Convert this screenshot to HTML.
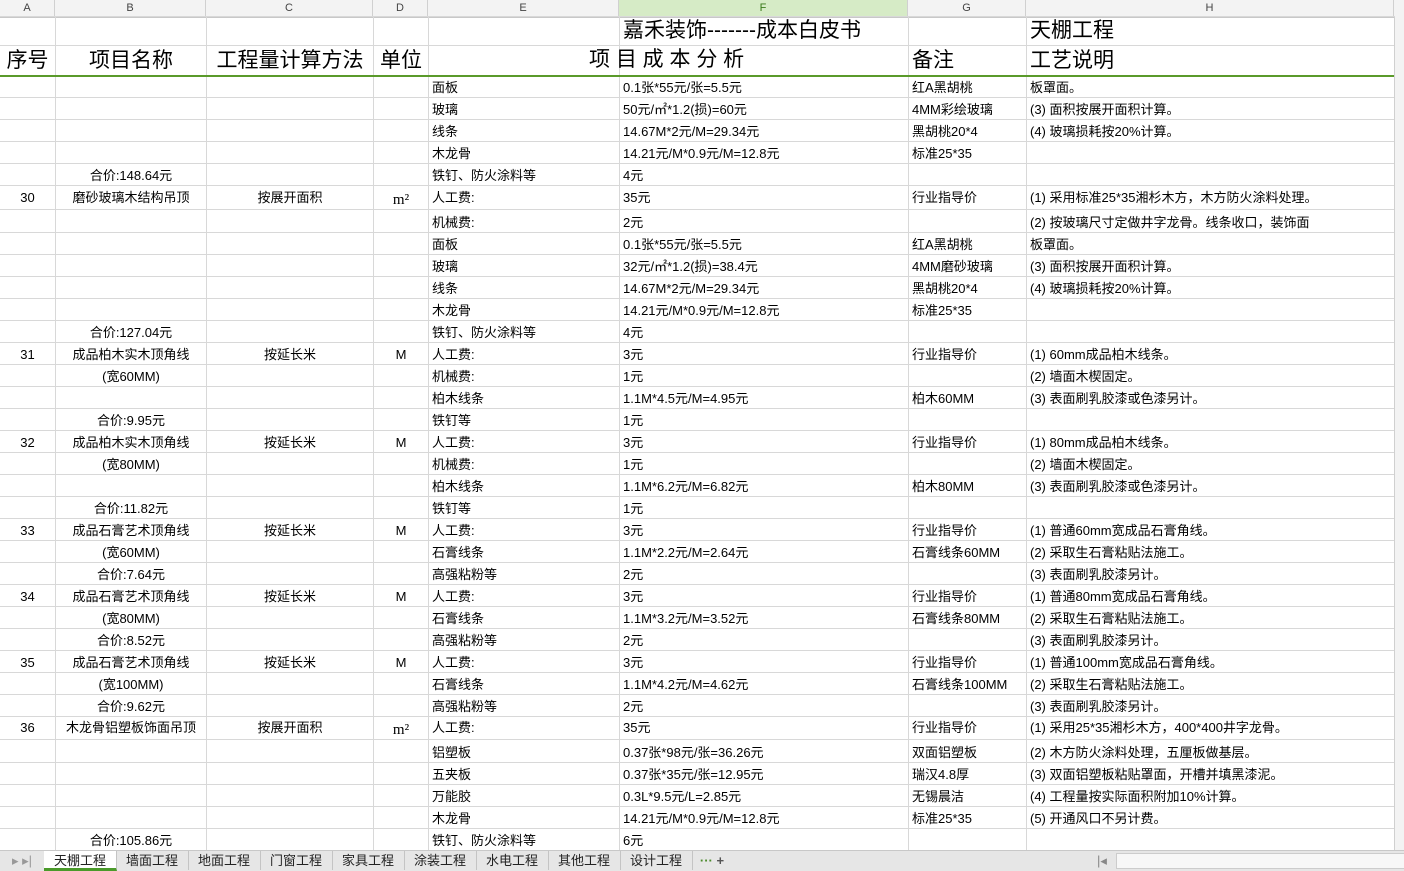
<!DOCTYPE html><html><head><meta charset="utf-8"><style>
body{margin:0;width:1404px;height:870px;overflow:hidden;background:#fff;font-family:"Liberation Sans","Noto Sans CJK SC",sans-serif;color:#000;position:relative}
.hdr{position:absolute;top:0;left:0;width:1404px;height:17px;background:#f3f3f3;border-bottom:1px solid #c8c8c8;font-size:11px;color:#444}
.hdr div{position:absolute;top:0;height:17px;line-height:17px;text-align:center;border-right:1px solid #d0d0d0;box-sizing:border-box}
table{position:absolute;top:16px;left:-1px;border-collapse:collapse;table-layout:fixed;font-size:13px}
td{border:1px solid #d8d8d8;padding:0 3px;white-space:nowrap;overflow:visible;vertical-align:bottom;line-height:18px}
td.c{text-align:center}
tr.big td{font-size:21px;line-height:28px}
.tabs{position:absolute;top:850px;left:0;width:1404px;height:20px;background:#e6e6e6;border-top:1px solid #c8c8c8;font-size:13px}
.tabs span{position:absolute;top:0;height:19px;line-height:19px;text-align:center;border-right:1px solid #c4c4c4;color:#222}
</style></head><body>
<div class="hdr">
<div style="left:0;width:55px">A</div><div style="left:55px;width:151px">B</div><div style="left:206px;width:167px">C</div><div style="left:373px;width:55px">D</div><div style="left:428px;width:191px">E</div><div style="left:619px;width:289px;background:#d6ebc6;color:#3a7a1a">F</div><div style="left:908px;width:118px">G</div><div style="left:1026px;width:368px">H</div>
</div>
<table>
<colgroup><col style="width:56px"><col style="width:151px"><col style="width:167px"><col style="width:55px"><col style="width:191px"><col style="width:289px"><col style="width:118px"><col style="width:368px"></colgroup>
<tr class="big" style="height:29px"><td></td><td></td><td></td><td></td><td></td><td>嘉禾装饰-------成本白皮书</td><td></td><td>天棚工程</td></tr>
<tr class="big" style="height:30px;border-bottom:2px solid #5a9a2a"><td class="c">序号</td><td class="c">项目名称</td><td class="c">工程量计算方法</td><td class="c">单位</td><td style="text-align:right;overflow:visible;position:relative"><span style="position:absolute;left:160px;bottom:1px">项 目 成 本 分 析</span></td><td></td><td>备注</td><td>工艺说明</td></tr>
<tr style="height:22px"><td></td><td></td><td></td><td></td><td>面板</td><td>0.1张*55元/张=5.5元</td><td>红A黑胡桃</td><td>板罩面。</td></tr>
<tr style="height:22px"><td></td><td></td><td></td><td></td><td>玻璃</td><td>50元/㎡*1.2(损)=60元</td><td>4MM彩绘玻璃</td><td>(3) 面积按展开面积计算。</td></tr>
<tr style="height:22px"><td></td><td></td><td></td><td></td><td>线条</td><td>14.67M*2元/M=29.34元</td><td>黑胡桃20*4</td><td>(4) 玻璃损耗按20%计算。</td></tr>
<tr style="height:22px"><td></td><td></td><td></td><td></td><td>木龙骨</td><td>14.21元/M*0.9元/M=12.8元</td><td>标准25*35</td><td></td></tr>
<tr style="height:22px"><td></td><td class="c">合价:148.64元</td><td></td><td></td><td>铁钉、防火涂料等</td><td>4元</td><td></td><td></td></tr>
<tr style="height:24px"><td class="c" style="vertical-align:middle">30</td><td class="c" style="vertical-align:middle">磨砂玻璃木结构吊顶</td><td class="c" style="vertical-align:middle">按展开面积</td><td class="c" style="font-family:'Liberation Serif',serif;font-size:15px">m²</td><td style="vertical-align:middle">人工费:</td><td style="vertical-align:middle">35元</td><td style="vertical-align:middle">行业指导价</td><td style="vertical-align:middle">(1) 采用标准25*35湘杉木方，木方防火涂料处理。</td></tr>
<tr style="height:23px"><td></td><td></td><td></td><td></td><td>机械费:</td><td>2元</td><td></td><td>(2) 按玻璃尺寸定做井字龙骨。线条收口，装饰面</td></tr>
<tr style="height:22px"><td></td><td></td><td></td><td></td><td>面板</td><td>0.1张*55元/张=5.5元</td><td>红A黑胡桃</td><td>板罩面。</td></tr>
<tr style="height:22px"><td></td><td></td><td></td><td></td><td>玻璃</td><td>32元/㎡*1.2(损)=38.4元</td><td>4MM磨砂玻璃</td><td>(3) 面积按展开面积计算。</td></tr>
<tr style="height:22px"><td></td><td></td><td></td><td></td><td>线条</td><td>14.67M*2元/M=29.34元</td><td>黑胡桃20*4</td><td>(4) 玻璃损耗按20%计算。</td></tr>
<tr style="height:22px"><td></td><td></td><td></td><td></td><td>木龙骨</td><td>14.21元/M*0.9元/M=12.8元</td><td>标准25*35</td><td></td></tr>
<tr style="height:22px"><td></td><td class="c">合价:127.04元</td><td></td><td></td><td>铁钉、防火涂料等</td><td>4元</td><td></td><td></td></tr>
<tr style="height:22px"><td class="c">31</td><td class="c">成品柏木实木顶角线</td><td class="c">按延长米</td><td class="c">M</td><td>人工费:</td><td>3元</td><td>行业指导价</td><td>(1) 60mm成品柏木线条。</td></tr>
<tr style="height:22px"><td></td><td class="c">(宽60MM)</td><td></td><td></td><td>机械费:</td><td>1元</td><td></td><td>(2) 墙面木楔固定。</td></tr>
<tr style="height:22px"><td></td><td></td><td></td><td></td><td>柏木线条</td><td>1.1M*4.5元/M=4.95元</td><td>柏木60MM</td><td>(3) 表面刷乳胶漆或色漆另计。</td></tr>
<tr style="height:22px"><td></td><td class="c">合价:9.95元</td><td></td><td></td><td>铁钉等</td><td>1元</td><td></td><td></td></tr>
<tr style="height:22px"><td class="c">32</td><td class="c">成品柏木实木顶角线</td><td class="c">按延长米</td><td class="c">M</td><td>人工费:</td><td>3元</td><td>行业指导价</td><td>(1) 80mm成品柏木线条。</td></tr>
<tr style="height:22px"><td></td><td class="c">(宽80MM)</td><td></td><td></td><td>机械费:</td><td>1元</td><td></td><td>(2) 墙面木楔固定。</td></tr>
<tr style="height:22px"><td></td><td></td><td></td><td></td><td>柏木线条</td><td>1.1M*6.2元/M=6.82元</td><td>柏木80MM</td><td>(3) 表面刷乳胶漆或色漆另计。</td></tr>
<tr style="height:22px"><td></td><td class="c">合价:11.82元</td><td></td><td></td><td>铁钉等</td><td>1元</td><td></td><td></td></tr>
<tr style="height:22px"><td class="c">33</td><td class="c">成品石膏艺术顶角线</td><td class="c">按延长米</td><td class="c">M</td><td>人工费:</td><td>3元</td><td>行业指导价</td><td>(1) 普通60mm宽成品石膏角线。</td></tr>
<tr style="height:22px"><td></td><td class="c">(宽60MM)</td><td></td><td></td><td>石膏线条</td><td>1.1M*2.2元/M=2.64元</td><td>石膏线条60MM</td><td>(2) 采取生石膏粘贴法施工。</td></tr>
<tr style="height:22px"><td></td><td class="c">合价:7.64元</td><td></td><td></td><td>高强粘粉等</td><td>2元</td><td></td><td>(3) 表面刷乳胶漆另计。</td></tr>
<tr style="height:22px"><td class="c">34</td><td class="c">成品石膏艺术顶角线</td><td class="c">按延长米</td><td class="c">M</td><td>人工费:</td><td>3元</td><td>行业指导价</td><td>(1) 普通80mm宽成品石膏角线。</td></tr>
<tr style="height:22px"><td></td><td class="c">(宽80MM)</td><td></td><td></td><td>石膏线条</td><td>1.1M*3.2元/M=3.52元</td><td>石膏线条80MM</td><td>(2) 采取生石膏粘贴法施工。</td></tr>
<tr style="height:22px"><td></td><td class="c">合价:8.52元</td><td></td><td></td><td>高强粘粉等</td><td>2元</td><td></td><td>(3) 表面刷乳胶漆另计。</td></tr>
<tr style="height:22px"><td class="c">35</td><td class="c">成品石膏艺术顶角线</td><td class="c">按延长米</td><td class="c">M</td><td>人工费:</td><td>3元</td><td>行业指导价</td><td>(1) 普通100mm宽成品石膏角线。</td></tr>
<tr style="height:22px"><td></td><td class="c">(宽100MM)</td><td></td><td></td><td>石膏线条</td><td>1.1M*4.2元/M=4.62元</td><td>石膏线条100MM</td><td>(2) 采取生石膏粘贴法施工。</td></tr>
<tr style="height:22px"><td></td><td class="c">合价:9.62元</td><td></td><td></td><td>高强粘粉等</td><td>2元</td><td></td><td>(3) 表面刷乳胶漆另计。</td></tr>
<tr style="height:23px"><td class="c" style="vertical-align:middle">36</td><td class="c" style="vertical-align:middle">木龙骨铝塑板饰面吊顶</td><td class="c" style="vertical-align:middle">按展开面积</td><td class="c" style="font-family:'Liberation Serif',serif;font-size:15px">m²</td><td style="vertical-align:middle">人工费:</td><td style="vertical-align:middle">35元</td><td style="vertical-align:middle">行业指导价</td><td style="vertical-align:middle">(1) 采用25*35湘杉木方，400*400井字龙骨。</td></tr>
<tr style="height:23px"><td></td><td></td><td></td><td></td><td>铝塑板</td><td>0.37张*98元/张=36.26元</td><td>双面铝塑板</td><td>(2) 木方防火涂料处理，五厘板做基层。</td></tr>
<tr style="height:22px"><td></td><td></td><td></td><td></td><td>五夹板</td><td>0.37张*35元/张=12.95元</td><td>瑞汉4.8厚</td><td>(3) 双面铝塑板粘贴罩面，开槽并填黑漆泥。</td></tr>
<tr style="height:22px"><td></td><td></td><td></td><td></td><td>万能胶</td><td>0.3L*9.5元/L=2.85元</td><td>无锡晨洁</td><td>(4) 工程量按实际面积附加10%计算。</td></tr>
<tr style="height:22px"><td></td><td></td><td></td><td></td><td>木龙骨</td><td>14.21元/M*0.9元/M=12.8元</td><td>标准25*35</td><td>(5) 开通风口不另计费。</td></tr>
<tr style="height:22px"><td></td><td class="c">合价:105.86元</td><td></td><td></td><td>铁钉、防火涂料等</td><td>6元</td><td></td><td></td></tr>
</table>
<div style="position:absolute;top:17px;left:1394px;width:10px;height:833px;background:#f3f3f3;border-left:1px solid #d0d0d0"></div>
<div class="tabs">
<span style="left:0;width:44px;color:#999;border:none">▸ ▸|</span>
<span style="left:44px;width:72px;background:#fff;border-bottom:3px solid #4a9a2a;height:17px">天棚工程</span>
<span style="left:116px;width:72px">墙面工程</span>
<span style="left:188px;width:72px">地面工程</span>
<span style="left:260px;width:72px">门窗工程</span>
<span style="left:332px;width:72px">家具工程</span>
<span style="left:404px;width:72px">涂装工程</span>
<span style="left:476px;width:72px">水电工程</span>
<span style="left:548px;width:72px">其他工程</span>
<span style="left:620px;width:72px">设计工程</span>
<span style="left:694px;width:36px;border:none;color:#4a8a2a;font-weight:bold">··· <b style="color:#555">+</b></span>
<span style="left:1092px;width:20px;border:none;color:#888">|◂</span>
<span style="left:1116px;width:288px;height:14px;top:2px;background:#f7f7f7;border:1px solid #ccc"></span>
</div>
</body></html>
